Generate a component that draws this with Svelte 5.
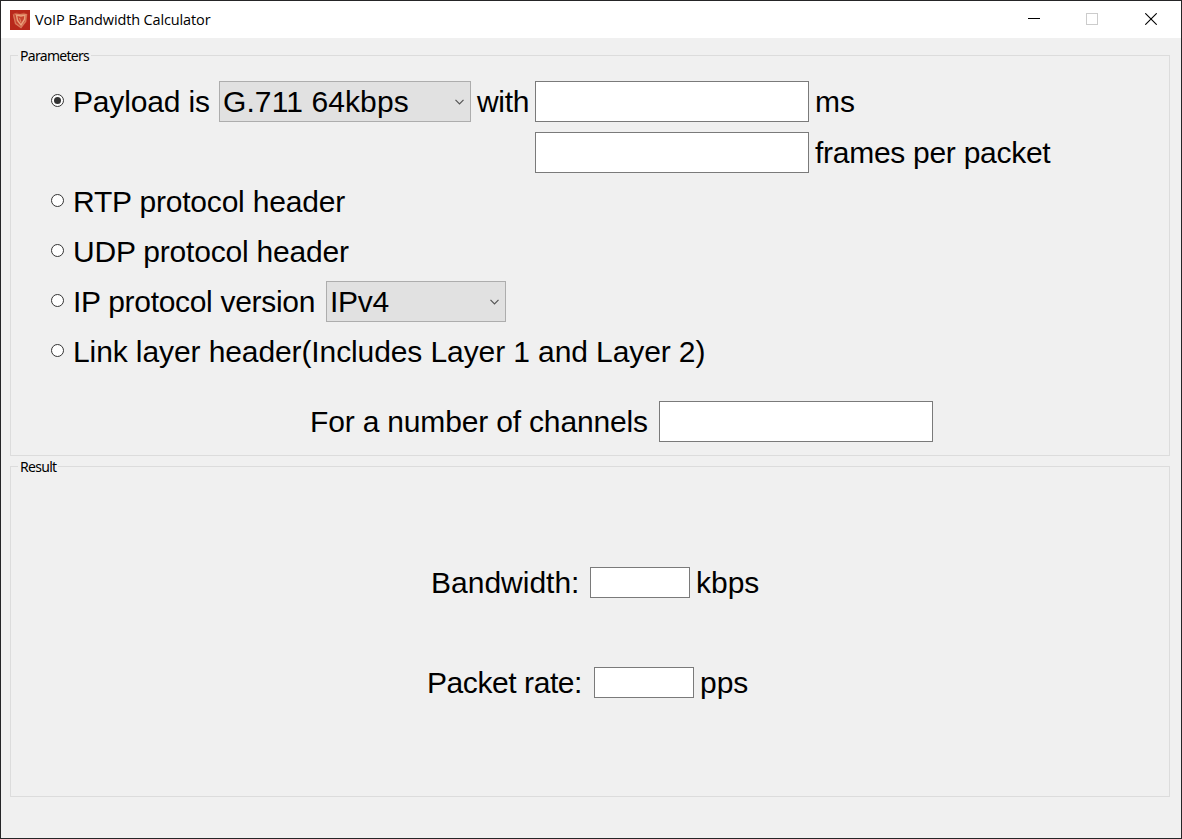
<script>
  let selected = $state('payload');
  const plain = [
    { id: 'rtp', text: 'RTP protocol header' },
    { id: 'udp', text: 'UDP protocol header' }
  ];
</script>

{#snippet radio(id)}
  <button class="radio" aria-label={id} onclick={() => (selected = id)}>
    <svg width="13" height="13" viewBox="0 0 13 13">
      <circle cx="6.5" cy="6.5" r="6" fill="#fff" stroke="#333" />
      {#if selected === id}<circle cx="6.5" cy="6.5" r="3.5" fill="#333" />{/if}
    </svg>
  </button>
{/snippet}

{#snippet chevron()}
  <svg class="chevron" width="9" height="6" viewBox="0 0 9 6">
    <path d="M.5 .9 4.5 4.9 8.5 .9" fill="none" stroke="#555" stroke-width="1.2" />
  </svg>
{/snippet}

<div class="window">
  <header>
    <svg class="logo" width="20" height="20" viewBox="0 0 20 20">
      <rect width="20" height="20" fill="#b8281b" />
      <path d="M2.5 4 7 2.5 10 4 14 2.5 17.5 4 16.5 12 11 18 5.5 14Z" fill="#c8442f" />
      <path d="M3.5 4.5 5.5 13.5 11 17.5 15.5 11.5 16.5 4" fill="none" stroke="#d8785a" stroke-width="1.3" />
      <path d="M6.5 5 7.5 10.5 11 15 14.5 9.5 15 5 11 6Z" fill="none" stroke="#eaa27c" stroke-width="1.4" />
      <path d="M4.5 4 8 4.5 14.5 4.2M9.5 8 11 12.5" fill="none" stroke="#e08a66" />
    </svg>
    <span class="title">VoIP Bandwidth Calculator</span>
    <div class="controls">
      <svg width="12" height="12" viewBox="0 0 12 12"><path d="M0 5.5H12" stroke="#000" /></svg>
      <svg width="12" height="12" viewBox="0 0 12 12"><rect x=".5" y=".5" width="11" height="11" fill="none" stroke="#ccc" /></svg>
      <svg class="close" width="12" height="12" viewBox="0 0 12 12"><path d="M.3 .3 11.7 11.7M11.7 .3 .3 11.7" stroke="#000" stroke-width="1.1" /></svg>
    </div>
  </header>

  <section class="group params">
    <h2>Parameters</h2>
    <div class="row first">
      {@render radio('payload')}
      <span class="text w-payload">Payload is</span>
      <div class="select codec"><span>G.711 64kbps</span>{@render chevron()}</div>
      <span class="text w-with">with</span>
      <input aria-label="ms" />
      <span class="text unit">ms</span>
    </div>
    <div class="row frames">
      <input aria-label="frames per packet" />
      <span class="text unit fpp">frames per packet</span>
    </div>
    {#each plain as item}
      <div class="row low">
        {@render radio(item.id)}
        <span class="text header">{item.text}</span>
      </div>
    {/each}
    <div class="row low">
      {@render radio('ip')}
      <span class="text w-ip">IP protocol version</span>
      <div class="select version"><span>IPv4</span>{@render chevron()}</div>
    </div>
    <div class="row low">
      {@render radio('link')}
      <span class="text link">Link layer header(Includes Layer 1 and Layer 2)</span>
    </div>
    <div class="row low channels">
      <span class="text w-channels">For a number of channels</span>
      <input aria-label="channels" />
    </div>
  </section>

  <section class="group result">
    <h2>Result</h2>
    <div class="row bandwidth">
      <span class="text">Bandwidth:</span>
      <input class="small" aria-label="bandwidth" readonly />
      <span class="text unit">kbps</span>
    </div>
    <div class="row rate">
      <span class="text">Packet rate:</span>
      <input class="small" aria-label="packet rate" readonly />
      <span class="text unit">pps</span>
    </div>
  </section>
</div>

<style>
  * { box-sizing: border-box; }
  .window {
    width: 1182px;
    height: 839px;
    border: 1px solid #252527;
    background: #f0f0f0;
    color: #000;
    font-family: "Liberation Sans", Arial, sans-serif;
    overflow: hidden;
  }
  header {
    height: 37px;
    background: #fff;
    display: flex;
    align-items: center;
    padding-left: 9px;
  }
  .title {
    margin-left: 5px;
    font: 14.5px/20px "Open Sans", sans-serif;
    letter-spacing: -0.14px;
    white-space: nowrap;
  }
  .controls { display: flex; gap: 46px; margin: 0 24px 1px auto; }
  .close { margin-left: 1px; }
  svg { display: block; flex: none; }
  .group {
    width: 1160px;
    margin-left: 9px;
    border: 1px solid #dcdcdc;
  }
  .params { height: 401px; margin-top: 17px; }
  .result { height: 331px; margin-top: 10px; }
  h2 {
    width: max-content;
    height: 20px;
    margin: -10px 0 0 7px;
    padding: 0 2px;
    background: #f0f0f0;
    font: 14px/20px "Noto Sans", sans-serif;
    letter-spacing: -0.7px;
  }
  .row {
    height: 50px;
    display: flex;
    align-items: center;
    padding-left: 40px;
  }
  .radio {
    width: 13px;
    height: 13px;
    margin: -2px 9px 0 0;
    padding: 0;
    border: 0;
    background: none;
    flex: none;
  }
  .text, .select span { font-size: 30px; line-height: 40px; white-space: nowrap; flex: none; }
  .low .text, .low .select span { padding-top: 2px; }
  input {
    width: 274px;
    height: 41px;
    padding: 0 4px;
    border: 1px solid #7a7a7a;
    border-radius: 0;
    background: #fff;
    font: 30px "Liberation Sans", sans-serif;
    outline: none;
    flex: none;
  }
  .unit { margin-left: 6px; }
  .select {
    height: 41px;
    display: flex;
    align-items: center;
    justify-content: space-between;
    padding: 0 6px 0 3px;
    border: 1px solid #adadad;
    background: #e1e1e1;
  }
  .version .chevron { margin-top: 1px; }
  .first { height: 51px; margin-top: 10px; }
  .w-payload { width: 146px; letter-spacing: -0.16px; }
  .codec { width: 252px; letter-spacing: 0.1px; }
  .w-with { width: 64px; padding-left: 6px; letter-spacing: -0.3px; }
  .frames { height: 51px; padding-left: 524px; margin-bottom: -2px; }
  .fpp { letter-spacing: -0.28px; }
  .header { letter-spacing: -0.2px; }
  .w-ip { width: 253px; letter-spacing: -0.31px; }
  .version { width: 180px; letter-spacing: -0.3px; }
  .link { letter-spacing: -0.1px; }
  .channels { margin-top: 20px; padding-left: 299px; }
  .w-channels { width: 349px; letter-spacing: -0.17px; }
  .small { width: 100px; height: 31px; margin-top: -2px; }
  .bandwidth { margin-top: 81px; padding-left: 420px; }
  .bandwidth .text:first-child { width: 159px; }
  .rate { margin-top: 50px; padding-left: 416px; }
  .rate .text:first-child { width: 167px; letter-spacing: -0.42px; }
</style>
